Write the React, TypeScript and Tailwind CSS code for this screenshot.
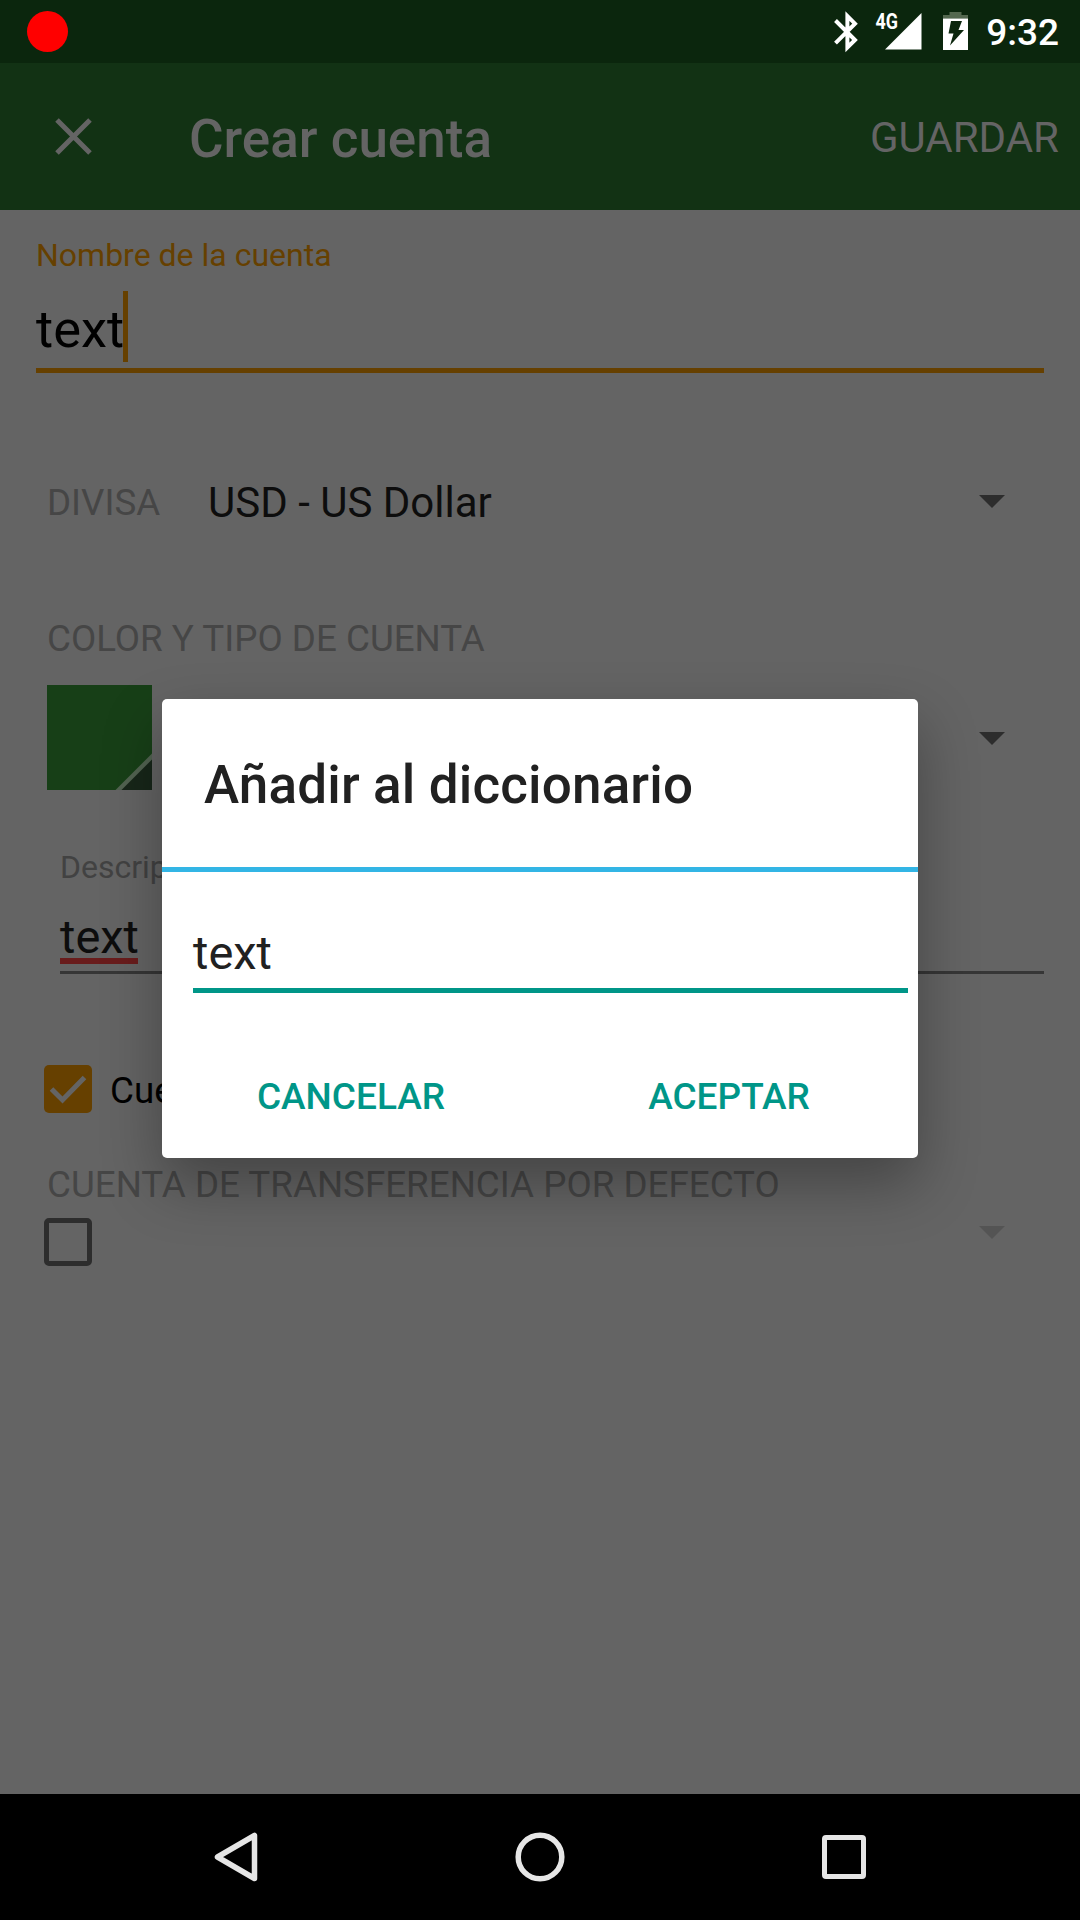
import React from "react";

function StatusBar() {
  return (
    <div className="flex h-[63px] items-center bg-[#0b260d] pl-[27px] pr-[21px]">
      <div className="h-[41px] w-[41px] rounded-full bg-[#ff0000]" />
      <svg className="ml-auto h-[63px] w-[142px]" viewBox="830 0 142 63" fill="none">
        <path
          d="M835.5 20.5 L855 40 L847.4 47.5 V16 L855 23.7 L835.5 43.2"
          stroke="#fff"
          strokeWidth="4"
        />
        <text x="875.5" y="29" fontFamily="Roboto" fontWeight="700" fontSize="21.5" textLength="22.5" lengthAdjust="spacingAndGlyphs" fill="#fff">
          4G
        </text>
        <path d="M921.5 13 V49.5 H885 Z" fill="#fff" />
        <path d="M943 18.5 V15 H949.5 V12 H961.5 V15 H968 V18.5 Z" fill="#54684f" />
        <path d="M943 18.5 H968 V50 H943 Z" fill="#fff" />
        <path d="M951 21 H962 L958.5 30 H964 L950 45.5 L953.5 33.5 H948.5 Z" fill="#0b260d" />
      </svg>
      <span className="ml-[14px] mt-[2px] text-[37px] font-medium leading-[61px] text-white">9:32</span>
    </div>
  );
}

function AppBar() {
  return (
    <div className="flex h-[147px] items-center bg-[#123214] pl-[55px] pr-[21px] text-[#646464]">
      <svg className="h-[37px] w-[37px]" viewBox="0 0 37 37" stroke="#646464" strokeWidth="5">
        <path d="M2 2 L35 35 M35 2 L2 35" />
      </svg>
      <h1 className="ml-[97px] mt-[4px] text-[53px] font-medium leading-[60px]">Crear cuenta</h1>
      <span className="ml-auto mt-[2px] text-[42px] leading-[60px]">GUARDAR</span>
    </div>
  );
}

function Arrow({ className }: { className: string }) {
  return (
    <svg className={`h-[13px] w-[26px] ${className}`} viewBox="0 0 26 13" fill="currentColor">
      <path d="M0 0 H26 L13 13 Z" />
    </svg>
  );
}

function Form() {
  return (
    <div className="flex h-[1584px] flex-col bg-[#646464] pt-[27px]">
      <div className="ml-[36px] mr-[36px] h-[136px] border-b-[5px] border-[#664000]">
        <label className="block h-[36px] text-[32px] leading-[36px] text-[#664000]">Nombre de la cuenta</label>
        <div className="mt-[18px] flex h-[71px]">
          <span className="w-[87px] text-[52.5px] leading-[76px] text-black">text</span>
          <span className="w-[5px] bg-[#664000]" />
        </div>
      </div>

      <div className="mt-[99px] flex h-[60px] items-center pl-[47px] pr-[75.5px]">
        <span className="mt-[2px] w-[161px] text-[36.75px] text-[#464646]">DIVISA</span>
        <span className="text-[42px] text-[#0d0d0d]">USD - US Dollar</span>
        <Arrow className="-mt-[1px] ml-auto text-[#2d2d2d]" />
      </div>

      <div className="mt-[86px] h-[40px] pl-[47px] text-[36.75px] leading-[42px] text-[#464646]">COLOR Y TIPO DE CUENTA</div>
      <div className="mt-[27px] flex h-[105px] items-start pl-[47px] pr-[75.5px]">
        <svg className="h-[105px] w-[105px]" viewBox="0 0 105 105">
          <path d="M0 0 H105 V105 H0 Z" fill="#173f17" />
          <path d="M105 68.5 V105 H68.5 Z" fill="#526351" />
          <path d="M105 74.5 V105 H74.5 Z" fill="#172619" />
        </svg>
        <Arrow className="ml-auto mt-[47px] text-[#2d2d2d]" />
      </div>

      <div className="ml-[60px] mr-[36px] mt-[59px] h-[125px] border-b-[3px] border-[#363636]">
        <label className="block h-[36px] text-[32px] leading-[36px] text-[#424242]">Descripción</label>
        <div className="mt-[23px] h-[56px] w-[78px] border-b-[6px] border-[#691c1c] text-[47px] leading-[58px] text-[#0d0d0d]">
          text
        </div>
      </div>

      <div className="mt-[91px] flex h-[48px] items-center pl-[44px]">
        <svg className="h-[48px] w-[48px]" viewBox="0 0 48 48" fill="none">
          <rect width="48" height="48" rx="5" fill="#664000" />
          <path d="M7.5 24 L18.5 35 L40.5 12.5" stroke="#646464" strokeWidth="5" />
        </svg>
        <span className="ml-[18px] mt-[3px] text-[36.75px] leading-[48px] text-black">Cuenta</span>
      </div>

      <div className="mt-[51px] h-[40px] pl-[47px] text-[36.75px] leading-[42px] text-[#464646]">
        CUENTA DE TRANSFERENCIA POR DEFECTO
      </div>
      <div className="mt-[14px] flex h-[48px] items-start pl-[44px] pr-[75.5px]">
        <div className="h-[48px] w-[48px] rounded-[5px] border-[5px] border-[#2d2d2d]" />
        <Arrow className="ml-auto mt-[8px] text-[#545454]" />
      </div>
    </div>
  );
}

function NavBar() {
  return (
    <div className="flex h-[126px] items-center bg-black pl-[213px]">
      <svg className="h-[52px] w-[46px]" viewBox="0 0 46 52" fill="none" stroke="#e6e6e6" strokeWidth="5.5" strokeLinejoin="round">
        <path d="M41.5 4.5 V47.5 L4.5 26 Z" />
      </svg>
      <svg className="ml-[255px] h-[52px] w-[52px]" viewBox="0 0 52 52" fill="none" stroke="#e6e6e6" strokeWidth="5.5">
        <circle cx="26" cy="26" r="21.8" />
      </svg>
      <div className="ml-[256px] h-[44px] w-[44px] rounded-[4px] border-[5px] border-[#e6e6e6]" />
    </div>
  );
}

function Dialog() {
  return (
    <div className="absolute left-[162px] top-[699px] flex h-[459px] w-[756px] flex-col rounded-[5px] bg-white shadow-[0_26px_60px_rgba(0,0,0,0.32)]">
      <h2 className="h-[168px] pl-[42px] text-[53px] font-medium leading-[172px] tracking-[0.15px] text-[#212121]">
        Añadir al diccionario
      </h2>
      <div className="h-[5px] bg-[#33b5e5]" />
      <div className="ml-[31px] mr-[10px] h-[121px] border-b-[5px] border-[#009688] pt-[53px] text-[47px] leading-[56px] text-[#212121]">
        text
      </div>
      <div className="mt-[40px] grid h-[125px] grid-cols-2 text-center text-[37px] font-medium leading-[127px] text-[#009688]">
        <span>CANCELAR</span>
        <span>ACEPTAR</span>
      </div>
    </div>
  );
}

export default function App() {
  return (
    <div className="relative h-[1920px] w-[1080px] overflow-hidden font-[Roboto,sans-serif]">
      <StatusBar />
      <AppBar />
      <Form />
      <NavBar />
      <Dialog />
    </div>
  );
}
